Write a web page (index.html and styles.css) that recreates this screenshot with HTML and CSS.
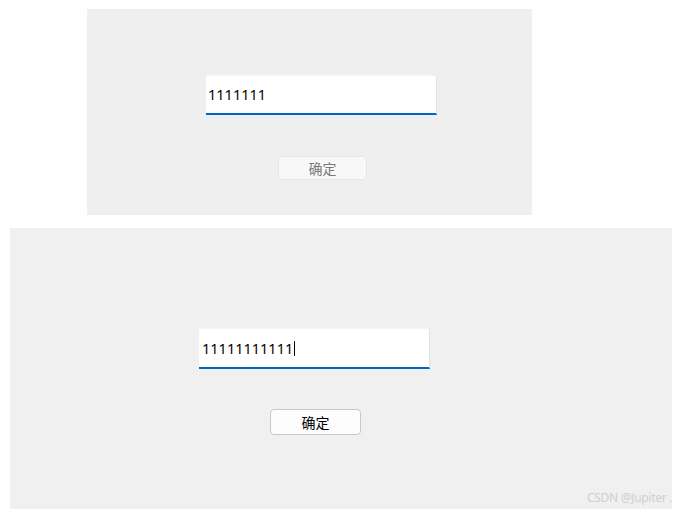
FILE: index.html
```html
<!DOCTYPE html>
<html lang="zh">
<head>
<meta charset="utf-8">
<title>确定</title>
<link rel="stylesheet" href="styles.css">
</head>
<body>
  <div class="panel panel-a">
    <div class="form">
      <div class="field field-a">1111111</div>
      <div class="btn btn-disabled">确定</div>
    </div>
  </div>
  <div class="panel panel-b">
    <div class="form">
      <div class="field field-b">11111111111<span class="caret"></span></div>
      <div class="btn btn-normal">确定</div>
    </div>
    <div class="watermark">CSDN @Jupiter .</div>
  </div>
</body>
</html>
```
FILE: styles.css
```css
html, body {
  margin: 0;
  padding: 0;
  background: #ffffff;
}
body {
  font-family: "Noto Sans", "Noto Sans CJK SC", sans-serif;
  font-size: 14px;
  color: #000;
}
.panel {
  background: #efefef;
  box-sizing: border-box;
  position: relative;
  overflow: hidden;
}
.panel-a {
  margin: 9px 0 0 87px;
  width: 445px;
  height: 206px;
  padding: 66px 0 0 119px;
}
.panel-b {
  margin: 13px 0 0 10px;
  width: 662px;
  height: 281px;
  padding: 100px 0 0 189px;
  background: #f0f0f0;
}
.form {
  width: 231px;
  display: flex;
  flex-direction: column;
  align-items: center;
}
.field {
  align-self: stretch;
  box-sizing: border-box;
  background: #ffffff;
  border-right: 1px solid #e4e4e4;
  border-top: 1px solid #f4f4f4;
  border-bottom: 2px solid #0067c0;
  display: flex;
  align-items: center;
  line-height: 1;
  font-size: 14.5px;
}
.field-a {
  height: 40px;
  padding-left: 2px;
}
.field-b {
  height: 41px;
  padding-left: 3px;
}
.caret {
  display: inline-block;
  width: 1px;
  height: 15px;
  background: #000;
  margin-left: 1px;
}
.btn {
  box-sizing: border-box;
  display: flex;
  align-items: center;
  justify-content: center;
  border-radius: 4px;
  font-size: 14px;
}
.btn-disabled {
  margin: 41px 0 0 2px;
  width: 89px;
  height: 24px;
  background: #f8f8f8;
  border: 1px solid #e6e6e6;
  color: #7a7a7a;
}
.btn-normal {
  margin: 40px 0 0 2px;
  width: 91px;
  height: 26px;
  background: #fdfdfd;
  border: 1px solid #c9c9c9;
  color: #000;
}
.watermark {
  position: absolute;
  left: 577px;
  top: 261px;
  font-size: 12px;
  color: #cfcfcf;
  white-space: nowrap;
  letter-spacing: -0.3px;
}
```
